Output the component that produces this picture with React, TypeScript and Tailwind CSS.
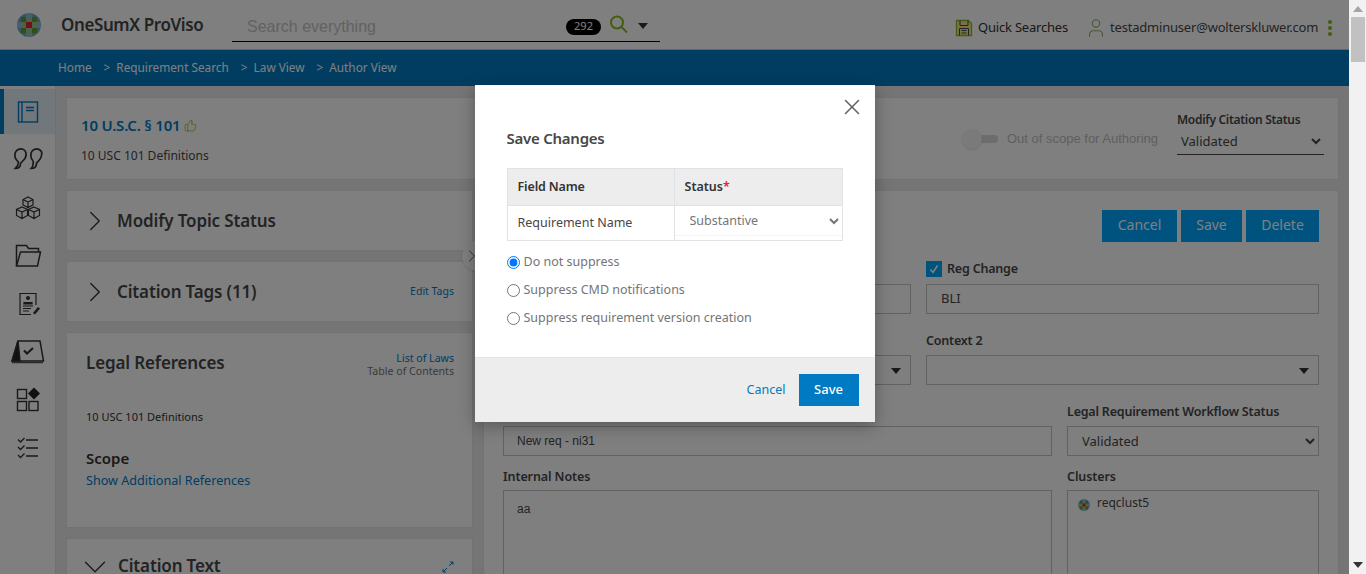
import { ChevronDown, ChevronRight, ThumbsUp, User, X } from "lucide-react";

const sans = "font-['Noto_Sans',sans-serif]";

function WkLogo({ size = 24 }: { size?: number }) {
  return (
    <svg width={size} height={size} viewBox="0 0 24 24">
      <defs>
        <clipPath id={`wk${size}`}>
          <circle cx="12" cy="12" r="12" />
        </clipPath>
      </defs>
      <g clipPath={`url(#wk${size})`}>
        <rect width="24" height="24" fill="#6fa8cc" />
        <rect x="4" y="4" width="16" height="16" fill="#7fb53a" />
        <rect x="0" y="9" width="24" height="6" fill="#a9cfd8" opacity="0.6" />
        <rect x="9" y="0" width="6" height="24" fill="#a9cfd8" opacity="0.6" />
        <rect x="4" y="4" width="5" height="5" fill="#5f9e30" />
        <rect x="15" y="4" width="5" height="5" fill="#5f9e30" />
        <rect x="4" y="15" width="5" height="5" fill="#5f9e30" />
        <rect x="15" y="15" width="5" height="5" fill="#5f9e30" />
        <rect x="9" y="9" width="6" height="6" fill="#e5202e" />
      </g>
    </svg>
  );
}

function SideIcon({ name }: { name: string }) {
  const c = name === "book" ? "#007ac3" : "#333";
  const common = { width: 32, height: 32, viewBox: "0 0 32 32", fill: "none", stroke: c, strokeWidth: 1.4 };
  switch (name) {
    case "book":
      return (
        <svg {...common}>
          <rect x="6.5" y="6" width="19" height="20" />
          <path d="M10 6v20M14 11.5h8M14 14.5h8" />
        </svg>
      );
    case "quote":
      return (
        <svg {...common} strokeWidth={1.6} width={34} height={34}>
          <path d="M4 24c3 0 5-2 5-5 3-3 6-5 5-10-1-3-4-4-7-3-3 1-4 5-3 8 1 2 2 3 3 4 0 2-1 4-3 6z" />
          <path d="M19 24c3 0 5-2 5-5 3-3 5-5 5-10-1-3-4-4-7-3-3 1-4 5-3 8 1 2 2 3 2 4 0 2 0 4-2 6z" />
        </svg>
      );
    case "cubes":
      return (
        <svg {...common} strokeWidth={1.2}>
          <path d="M16 5l5 2.500v5.500l-5 2.500-5-2.500V7.500zM11 7.500l5 2.500 5-2.500M16 10v5.500" />
          <path d="M10 15l5.500 2.500v6L10 26.500l-5.500-3v-6zM4.500 17.500l5.500 2.500 5.500-2.500M10 20v6.500" />
          <path d="M22 15l5.500 2.500v6L22 26.500l-5.500-3v-6zM16.500 17.500l5.500 2.500 5.500-2.500M22 20v6.500" />
        </svg>
      );
    case "folder":
      return (
        <svg {...common} strokeWidth={1.5} width={28} height={28} viewBox="0 0 28 28">
          <path d="M2.500 24V3.500h10l2 3h10V10" />
          <path d="M2.500 24h21l3-14H6.500z" />
        </svg>
      );
    case "doc":
      return (
        <svg {...common} strokeWidth={1.2}>
          <path d="M24 17V5.500H8v21h11" />
          <circle cx="16" cy="10" r="2" fill={c} stroke="none" />
          <path d="M12 14.500h8v1.500h-8z" fill={c} />
          <path d="M11 18h10M11 20.500h8M11 23h6" />
          <path d="M21 25l5-6 2 1.500-5 6z" fill={c} stroke="none" />
        </svg>
      );
    case "tent":
      return (
        <svg width={34} height={26} viewBox="0 0 34 26" fill="none" stroke="#333" strokeWidth="1.5">
          <path d="M7 2h22l3.500 20H1z" />
          <path d="M7 2L1 22h8z" fill="#222" />
          <path d="M13 11.500l3 3 6-5.500" strokeWidth="2.200" />
          <path d="M1 23.500h31" stroke="#555" />
        </svg>
      );
    case "grid":
      return (
        <svg {...common} strokeWidth={1.4}>
          <rect x="5.500" y="5.500" width="9" height="9" />
          <rect x="5.500" y="17.500" width="9" height="9" />
          <rect x="17" y="17.500" width="9" height="9" />
          <path d="M22 3.500l6 6-6 6-6-6z" fill="#222" stroke="none" />
        </svg>
      );
    default:
      return (
        <svg {...common} strokeWidth={1.3}>
          <path d="M6 7.500l2.500 2.500 4-4M6 15l2.500 2.500 4-4M6 23l2.500 2.500 4-4" />
          <path d="M14 8h12M14 16h12M14 24h12" />
        </svg>
      );
  }
}

function Caret({ className }: { className: string }) {
  return (
    <svg width="10" height="6" viewBox="0 0 10 6" className={className}>
      <path d="M0 0h10L5 6z" fill="#333" />
    </svg>
  );
}

function Label({ children }: { children?: React.ReactNode }) {
  return (
    <div className="h-[20px] text-[12.5px] leading-[12px] font-semibold tracking-[-0.2px] text-[#474747]">
      {children}
    </div>
  );
}

function Box({ children, caret }: { children?: React.ReactNode; caret?: boolean }) {
  return (
    <div className="relative flex h-[30px] items-center border border-[#c4c4c4] pl-[14px] text-[13px] text-[#474747]">
      {children}
      {caret && <Caret className="absolute right-[9px] top-[12px]" />}
    </div>
  );
}

function Panel({ className, children }: { className: string; children: React.ReactNode }) {
  return <section className={`border border-[#e5e5e5] bg-white ${className}`}>{children}</section>;
}

function Side() {
  const icons = ["book", "quote", "cubes", "folder", "doc", "tent", "grid", "list"];
  return (
    <aside className="w-[56px] shrink-0 border-r border-[#e0e0e0] bg-white pt-[3px]">
      {icons.map((n, i) => (
        <div
          key={n}
          className={`mb-[3px] flex h-[45px] items-center justify-center ${
            i === 0 ? "border-l-4 border-[#007ac3] bg-[#e5eff7] pr-[4px]" : ""
          }`}
        >
          <SideIcon name={n} />
        </div>
      ))}
    </aside>
  );
}

function TopBar() {
  return (
    <header className="flex h-[50px] items-center border-b border-[#c8c8c8] bg-white">
      <div className="ml-[17px] mr-[20px] pt-[1px]">
        <WkLogo />
      </div>
      <div className="w-[171px] text-[17px] font-semibold tracking-[-0.4px] text-[#474747]">OneSumX ProViso</div>
      <div className="flex h-[42px] w-[428px] items-center self-start border-b border-black">
        <span className="ml-[15px] flex-1 pt-[12px] font-['Liberation_Sans',sans-serif] text-[16px] text-[#c4c4c4]">
          Search everything
        </span>
        <span className="mt-[12px] flex h-[16px] w-[35px] items-center justify-center rounded-full bg-black text-[11px] text-white">
          292
        </span>
        <svg width="22" height="22" viewBox="0 0 22 22" fill="none" className="ml-[7px] mt-[9px]">
          <circle cx="9" cy="8.500" r="6" stroke="#85bc20" strokeWidth="2" />
          <path d="M13.500 13l5.500 5.500" stroke="#85bc20" strokeWidth="2" />
        </svg>
        <Caret className="ml-[8px] mr-[12px] mt-[10px]" />
      </div>
      <div className="mt-[6px] flex items-center">
        <svg width="18" height="18" viewBox="0 0 18 18" fill="none" className="ml-[295px]">
          <path d="M1.500 1.500h12l3 3v12h-15z" fill="#f4e58a" stroke="#85bc20" strokeWidth="1.300" />
          <path d="M5 1.500v5h8v-5M4.500 16.500v-7h9v7M6.500 11.500h5M6.500 14h5" stroke="#474747" />
        </svg>
        <span className="ml-[5px] text-[13px] tracking-[-0.2px] text-[#333]">Quick Searches</span>
        <User size={22} strokeWidth={1.2} className="ml-[17px] text-[#8fae6a]" />
        <span className="ml-[3px] text-[13px] tracking-[-0.2px] text-[#474747]">testadminuser@wolterskluwer.com</span>
        <div className="ml-[10px] flex flex-col gap-[2px]">
          <i className="h-[4px] w-[4px] rounded-full bg-[#85bc20]" />
          <i className="h-[4px] w-[4px] rounded-full bg-[#85bc20]" />
          <i className="h-[4px] w-[4px] rounded-full bg-[#85bc20]" />
        </div>
      </div>
    </header>
  );
}

function Crumbs() {
  const items = ["Home", "Requirement Search", "Law View", "Author View"];
  return (
    <nav className="flex h-[36px] items-center bg-[#007ac3] pl-[58px] text-[11.8px] text-white">
      {items.map((t, i) => (
        <span key={t} className="flex items-center">
          {i > 0 && <span className="ml-[12px] mr-[6px]">&gt;</span>}
          {t}
        </span>
      ))}
    </nav>
  );
}

function LeftColumn() {
  const h2 = "text-[17px] font-semibold tracking-[-0.15px] text-[#474747]";
  return (
    <div className="flex w-[407px] shrink-0 flex-col gap-[10px]">
      <Panel className="flex h-[61px] items-center pl-[11px]">
        <ChevronRight size={34} strokeWidth={0.9} className="text-[#333]" />
        <h2 className={`ml-[5px] ${h2}`}>Modify Topic Status</h2>
      </Panel>
      <Panel className="flex h-[61px] items-center pl-[11px] pr-[18px]">
        <ChevronRight size={34} strokeWidth={0.9} className="text-[#333]" />
        <h2 className={`ml-[5px] flex-1 ${h2}`}>Citation Tags (11)</h2>
        <a className="text-[10.5px] text-[#007ac3]">Edit Tags</a>
      </Panel>
      <Panel className="h-[196px] pl-[19px] pr-[18px] pt-[17px]">
        <div className="flex items-start justify-between">
          <h2 className={h2}>Legal References</h2>
          <div className="pt-[2px] text-right text-[10.6px] leading-[13px]">
            <a className="block text-[#007ac3]">List of Laws</a>
            <a className="block text-[#757575]">Table of Contents</a>
          </div>
        </div>
        <p className="mt-[31px] text-[11px] text-[#333]">10 USC 101 Definitions</p>
        <h3 className="mt-[21px] text-[15px] font-semibold text-[#333]">Scope</h3>
        <a className="mt-[3px] block text-[12.6px] leading-[18px] text-[#007ac3]">Show Additional References</a>
      </Panel>
      <Panel className="flex h-[80px] items-start pl-[9px] pr-[18px] pt-[9px]">
        <ChevronDown size={38} strokeWidth={0.8} className="text-[#333]" />
        <h2 className={`ml-[4px] mt-[5px] flex-1 ${h2}`}>Citation Text</h2>
        <svg width="12" height="12" viewBox="0 0 12 12" fill="none" stroke="#007ac3" className="mt-[13px]">
          <path d="M7 5l4-4M8 1h3v3M5 7l-4 4M1 8v3h3" />
        </svg>
      </Panel>
    </div>
  );
}

function RightColumn() {
  const small = "h-[19px] text-[12.5px] leading-[12px] font-semibold tracking-[-0.1px] text-[#474747]";
  return (
    <Panel className="h-[420px] flex-1 px-[19px] pt-[19px]">
      <div className="flex justify-end gap-[4px] text-[14px] text-white">
        <button className="h-[32px] w-[75px] bg-[#00a4ff] pb-[3px]">Cancel</button>
        <button className="h-[32px] w-[61px] bg-[#00a4ff] pb-[3px]">Save</button>
        <button className="h-[32px] w-[73px] bg-[#00a4ff] pb-[3px]">Delete</button>
      </div>
      <div className="mt-[19px] grid grid-cols-[408px_393px] gap-x-[15px] gap-y-[21px]">
        <div className="pt-[3px]">
          <Label />
          <Box />
        </div>
        <div>
          <div className="mb-[7px] flex h-[16px] items-center gap-[5px] text-[12.5px] font-semibold tracking-[-0.2px] text-[#474747]">
            <span className="flex h-[16px] w-[16px] items-center justify-center bg-[#00a4ff]">
              <svg width="12" height="12" viewBox="0 0 12 12" fill="none" stroke="#fff" strokeWidth="1.600">
                <path d="M2.500 6.500l2.500 3 4.500-7" />
              </svg>
            </span>
            Reg Change
          </div>
          <Box>BLI</Box>
        </div>
        <div>
          <Label />
          <Box caret />
        </div>
        <div>
          <Label>Context 2</Label>
          <Box caret />
        </div>
      </div>
      <div className="mt-[21px] grid grid-cols-[549px_252px] gap-x-[15px] gap-y-[15px]">
        <div>
          <Label />
          <div className="flex h-[30px] items-center border border-[#c4c4c4] pl-[13px] font-['Liberation_Sans',sans-serif] text-[12px] text-[#474747]">
            New req - ni31
          </div>
        </div>
        <div>
          <Label>Legal Requirement Workflow Status</Label>
          <select className="h-[30px] w-full border border-[#c4c4c4] bg-white pl-[10px] text-[13px] text-[#474747]">
            <option>Validated</option>
          </select>
        </div>
        <div>
          <div className={small}>Internal Notes</div>
          <div className="h-[120px] border border-[#c4c4c4] pl-[13px] pt-[9px] font-['Liberation_Sans',sans-serif] text-[12px] text-[#474747]">
            aa
          </div>
        </div>
        <div>
          <div className={small}>Clusters</div>
          <div className="flex h-[120px] items-start gap-[7px] border border-[#c4c4c4] pl-[10px] pt-[3px] text-[12px] text-[#474747]">
            <span className="mt-[5px]">
              <WkLogo size={12} />
            </span>
            reqclust5
          </div>
        </div>
      </div>
    </Panel>
  );
}

function SaveModal() {
  const opts = ["Do not suppress", "Suppress CMD notifications", "Suppress requirement version creation"];
  return (
    <div className="w-[400px] bg-white shadow-[0_4px_16px_rgba(0,0,0,0.3)]">
      <div className="relative h-[272px] px-[32px]">
        <X size={26} strokeWidth={1.5} className="absolute right-[10px] top-[9px] text-[#666]" />
        <h2 className="pt-[42px] text-[15px] leading-[22px] font-semibold tracking-[-0.25px] text-[#474747]">
          Save Changes
        </h2>
        <table className="mt-[19px] w-[336px] table-fixed border-collapse text-[12.5px]">
          <thead>
            <tr className="h-[37px] bg-[#ededed] text-left font-semibold text-[#333]">
              <th className="w-[167px] border border-[#dfe2e6] pl-[10px] font-semibold tracking-[-0.15px]">Field Name</th>
              <th className="border border-[#dfe2e6] pl-[10px] font-semibold">
                Status<span className="text-[#e5202e]">*</span>
              </th>
            </tr>
          </thead>
          <tbody>
            <tr className="h-[35px] text-[#474747]">
              <td className="border border-[#dfe2e6] pl-[10px]">Requirement Name</td>
              <td className="border border-[#dfe2e6] p-0 align-top">
                <select className="h-[30px] w-full border-b border-[#f3f3f3] bg-white pl-[11px] text-[12.5px] text-[#757575]">
                  <option>Substantive</option>
                </select>
              </td>
            </tr>
          </tbody>
        </table>
        <div className="mt-[11px] flex flex-col gap-[8px] text-[12.5px] text-[#757575]">
          {opts.map((o, i) => (
            <label key={o} className="flex h-[20px] items-center gap-[4px]">
              <input type="radio" name="suppress" defaultChecked={i === 0} className="m-0 h-[13px] w-[13px]" />
              {o}
            </label>
          ))}
        </div>
      </div>
      <div className="flex h-[65px] items-center justify-end gap-[13px] border-t border-[#e5e5e5] bg-[#ededed] pr-[16px]">
        <a className="text-[12.5px] text-[#007ac3]">Cancel</a>
        <button className="h-[32px] w-[60px] bg-[#007ac3] text-[13px] font-medium text-white">Save</button>
      </div>
    </div>
  );
}

export default function App() {
  return (
    <div className={`flex h-[574px] w-[1366px] overflow-hidden ${sans}`}>
      <div className="relative h-[574px] w-[1349px] overflow-hidden bg-[#ebebeb]">
        <TopBar />
        <Crumbs />
        <div className="flex">
          <Side />
          <main className="flex-1 px-[10px] pb-[10px] pt-[11px]">
            <Panel className="mb-[10px] flex h-[83px] items-start justify-between pl-[14px] pr-[14px]">
              <div className="pt-[16px]">
                <div className="flex items-center gap-[4px] text-[15px] font-semibold tracking-[-0.2px] text-[#007ac3]">
                  10 U.S.C. § 101
                  <ThumbsUp size={13} strokeWidth={1.3} className="text-[#85bc20]" />
                </div>
                <p className="mt-[10px] text-[12px] text-[#474747]">10 USC 101 Definitions</p>
              </div>
              <div className="flex items-start">
                <div className="mt-[31px] flex items-center">
                  <span className="relative h-[8px] w-[22px] rounded-full bg-[#dadada]">
                    <i className="absolute -left-[14px] -top-[6px] h-[20px] w-[20px] rounded-full bg-[#f5f5f5] shadow-sm" />
                  </span>
                  <span className="ml-[9px] font-['Liberation_Sans',sans-serif] text-[13px] text-[#c0c0c0]">
                    Out of scope for Authoring
                  </span>
                </div>
                <div className="ml-[19px] mt-[14px] w-[147px]">
                  <div className="text-[12px] leading-[16px] font-semibold tracking-[-0.3px] text-[#474747]">
                    Modify Citation Status
                  </div>
                  <select className="h-[27px] w-full border-b border-[#474747] bg-white text-[13px] text-[#474747]">
                    <option>Validated</option>
                  </select>
                </div>
              </div>
            </Panel>
            <div className="flex gap-[10px]">
              <LeftColumn />
              <RightColumn />
            </div>
          </main>
        </div>
        <span className="absolute left-[462px] top-[241px] flex h-[30px] w-[30px] items-center rounded-full bg-white shadow">
          <ChevronRight size={20} strokeWidth={1} className="text-[#333]" />
        </span>
        <div className="absolute inset-0 flex justify-center bg-black/50 pt-[85px]">
          <div>
            <SaveModal />
          </div>
        </div>
      </div>
      <div className="relative w-[17px] bg-[#f1f1f1]">
        <Caret className="absolute left-[4px] top-[6px] rotate-180 opacity-40" />
        <div className="absolute left-[2px] right-[1px] top-[17px] h-[45px] bg-[#c1c1c1]" />
        <Caret className="absolute bottom-[6px] left-[4px]" />
      </div>
    </div>
  );
}
